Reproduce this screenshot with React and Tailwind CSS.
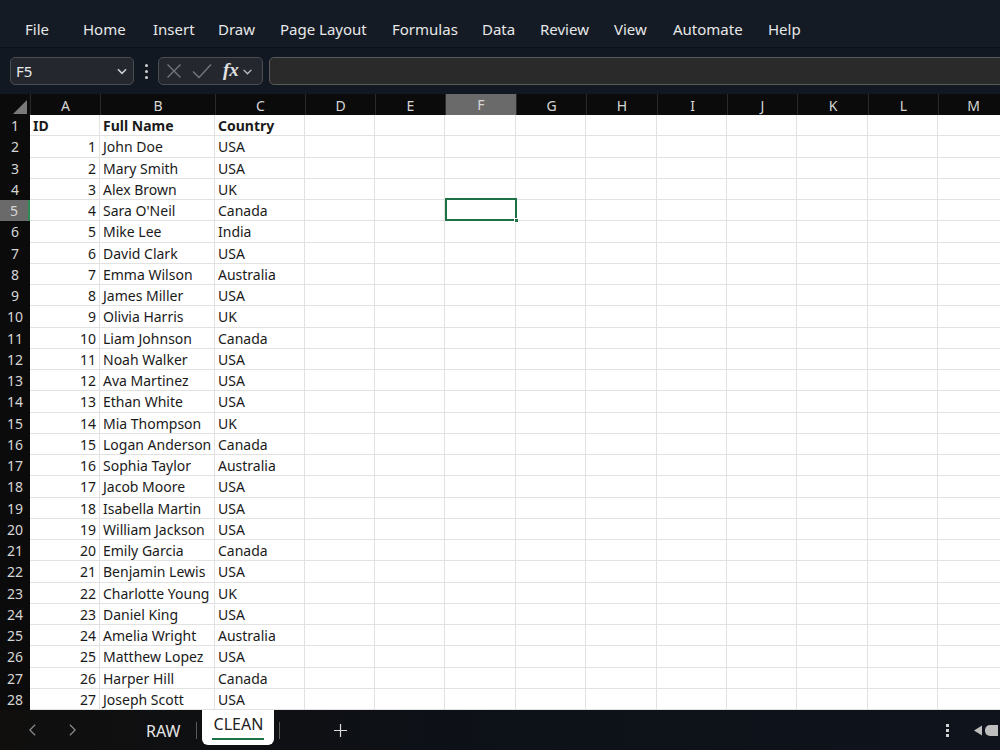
import React from 'react'

const menu = [
  ['File', 25],
  ['Home', 83],
  ['Insert', 153],
  ['Draw', 218],
  ['Page Layout', 280],
  ['Formulas', 392],
  ['Data', 482],
  ['Review', 540],
  ['View', 614],
  ['Automate', 673],
  ['Help', 768],
]

const cols = ['A', 'B', 'C', 'D', 'E', 'F', 'G', 'H', 'I', 'J', 'K', 'L', 'M']

const people = [
  ['John Doe', 'USA'],
  ['Mary Smith', 'USA'],
  ['Alex Brown', 'UK'],
  ["Sara O'Neil", 'Canada'],
  ['Mike Lee', 'India'],
  ['David Clark', 'USA'],
  ['Emma Wilson', 'Australia'],
  ['James Miller', 'USA'],
  ['Olivia Harris', 'UK'],
  ['Liam Johnson', 'Canada'],
  ['Noah Walker', 'USA'],
  ['Ava Martinez', 'USA'],
  ['Ethan White', 'USA'],
  ['Mia Thompson', 'UK'],
  ['Logan Anderson', 'Canada'],
  ['Sophia Taylor', 'Australia'],
  ['Jacob Moore', 'USA'],
  ['Isabella Martin', 'USA'],
  ['William Jackson', 'USA'],
  ['Emily Garcia', 'Canada'],
  ['Benjamin Lewis', 'USA'],
  ['Charlotte Young', 'UK'],
  ['Daniel King', 'USA'],
  ['Amelia Wright', 'Australia'],
  ['Matthew Lopez', 'USA'],
  ['Harper Hill', 'Canada'],
  ['Joseph Scott', 'USA'],
]

const gridCols = 'grid grid-cols-[30px_70px_115px_90px_70px_70px_71px_70px_71px_70px_70px_71px_70px_70px]'

function Chevron({ className }) {
  return (
    <svg viewBox="0 0 12 12" className={className} fill="none" stroke="currentColor" strokeWidth="1.3">
      <path d="M2.5 4.5 6 8l3.5-3.5" />
    </svg>
  )
}

function Row({ n, cells, bold }) {
  const selected = n === 5
  return (
    <div className={gridCols + ' h-[21.25px]'}>
      <div
        className={
          'flex items-center justify-center text-[14px] text-[#d6d6d6] ' +
          (selected ? 'bg-[#6a6a6a] border-r-2 border-[#2e8b57]' : 'bg-[#0b0b0b]')
        }
      >
        {n}
      </div>
      {cols.map((c, i) => {
        const v = cells[i] || ''
        return (
          <div
            key={c}
            className={
              'bg-white border-r border-b border-[#e2e2e2] text-[14px] text-[#1a1a1a] leading-[19px] pt-[1px] px-[3px] whitespace-nowrap overflow-visible ' +
              (i === 0 && !bold ? 'text-right ' : '') +
              (bold ? 'font-bold' : '')
            }
          >
            {v}
          </div>
        )
      })}
    </div>
  )
}

export default function App() {
  return (
    <div className="w-[1000px] h-[750px] overflow-hidden flex flex-col bg-[#131a24] font-['Noto_Sans',sans-serif]">
      {/* ribbon tabs */}
      <div className="h-[47px] shrink-0 flex items-center pt-[12px] bg-[#141b25] text-[15px] text-[#e8e8e8]">
        {menu.map(([m, x], i) => (
          <span
            key={m}
            className="whitespace-nowrap"
            style={{ width: (menu[i + 1] ? menu[i + 1][1] : x + 60) - x, marginLeft: i === 0 ? x : 0 }}
          >
            {m}
          </span>
        ))}
      </div>

      {/* formula bar */}
      <div className="h-[47px] shrink-0 flex items-center px-[10px] bg-[#121821] border-t border-[#0d1219]">
        <div className="w-[124px] h-[28px] rounded-[5px] bg-[#24282e] border border-[#4a4d52] flex items-center justify-between pl-[5px] pr-[4px] text-[15px] text-[#eaeaea]">
          <span>F5</span>
          <Chevron className="w-[14px] h-[14px] text-[#cfcfcf]" />
        </div>
        <div className="flex flex-col gap-[3px] ml-[11px] mr-[10px]">
          <span className="w-[3px] h-[3px] bg-[#d0d0d0] rounded-full" />
          <span className="w-[3px] h-[3px] bg-[#d0d0d0] rounded-full" />
          <span className="w-[3px] h-[3px] bg-[#d0d0d0] rounded-full" />
        </div>
        <div className="w-[105px] h-[28px] rounded-[5px] bg-[#24282e] border border-[#4a4d52] flex items-center pl-[7px] text-[#75787d]">
          <svg viewBox="0 0 16 16" className="w-[16px] h-[16px]" fill="none" stroke="currentColor" strokeWidth="1.3">
            <path d="M1.5 1.5l13 13M14.5 1.5l-13 13" />
          </svg>
          <svg viewBox="0 0 20 16" className="ml-[10px] w-[20px] h-[16px]" fill="none" stroke="currentColor" strokeWidth="1.3">
            <path d="M1 8.5l6 6L19 1.5" />
          </svg>
          <span className="ml-[11px] font-['Liberation_Serif',serif] italic font-bold text-[19px] text-[#e0e0e0] leading-none -mt-[3px]">fx</span>
          <Chevron className="ml-[2px] w-[13px] h-[13px] text-[#bdbdbd]" />
        </div>
        <div className="ml-[6px] flex-1 h-[28px] rounded-[5px] bg-[#2a2a2a] border border-[#5a5a5a] mr-[-14px]" />
      </div>

      {/* grid */}
      <div className="flex-1 bg-white relative overflow-hidden">
        <div className={gridCols + ' h-[21px] bg-[#0b0b0b] text-[14px] text-[#d6d6d6]'}>
          <div className="relative">
            <svg viewBox="0 0 10 10" className="absolute right-[3px] bottom-[3px] w-[14px] h-[14px]">
              <path d="M10 0 10 10 0 10Z" fill="#7a7a7a" />
            </svg>
          </div>
          {cols.map((c) => (
            <div
              key={c}
              className={
                'flex items-center justify-center border-l border-[#2a2a2a] ' +
                (c === 'F' ? 'bg-[#6a6a6a] border-b-2 border-b-[#2e8b57]' : '')
              }
            >
              {c}
            </div>
          ))}
        </div>
        <Row n={1} cells={['ID', 'Full Name', 'Country']} bold />
        {people.map((p, i) => (
          <Row key={i} n={i + 2} cells={[String(i + 1), p[0], p[1]]} />
        ))}
        {/* active cell */}
        <div className="absolute left-[445px] top-[104px] w-[72px] h-[23px] border-2 border-[#1e7145]">
          <div className="absolute -right-[4px] -bottom-[4px] w-[5px] h-[5px] bg-[#1e7145] border border-white" />
        </div>
      </div>

      {/* sheet tabs */}
      <div className="h-[40px] shrink-0 flex items-center bg-gradient-to-r from-[#100f0e] via-[#0d1118] to-[#0f131b] relative">
        <div className="flex items-center gap-[31px] pl-[28px] text-[#8a8a8a]">
          <svg viewBox="0 0 10 16" className="w-[9px] h-[14px]" fill="none" stroke="currentColor" strokeWidth="1.4">
            <path d="M8 2 2 8l6 6" />
          </svg>
          <svg viewBox="0 0 10 16" className="w-[9px] h-[14px]" fill="none" stroke="currentColor" strokeWidth="1.4">
            <path d="M2 2l6 6-6 6" />
          </svg>
        </div>
        <span className="ml-[69px] text-[16px] text-[#e6e6e6] mt-[2px]">RAW</span>
        <span className="ml-[16px] w-px h-[17px] bg-[#5a5a5a]" />
        <div className="ml-[5px] self-start h-[35px] w-[72px] bg-white rounded-b-[6px] flex flex-col items-center justify-center">
          <span className="text-[16px] text-[#222] leading-none">CLEAN</span>
          <span className="mt-[6px] w-[52px] h-[2px] bg-[#1e7145]" />
        </div>
        <span className="ml-[5px] w-px h-[17px] bg-[#5a5a5a]" />
        <svg viewBox="0 0 16 16" className="ml-[53px] w-[15px] h-[15px] text-[#d8d8d8]" fill="none" stroke="currentColor" strokeWidth="1.3">
          <path d="M8 1v14M1 8h14" />
        </svg>
        <div className="ml-auto flex items-center">
          <div className="flex flex-col gap-[2px]">
            <span className="w-[3px] h-[3px] bg-[#d0d0d0]" />
            <span className="w-[3px] h-[3px] bg-[#d0d0d0]" />
            <span className="w-[3px] h-[3px] bg-[#d0d0d0]" />
          </div>
          <div className="ml-[25px] mr-[2px] flex items-center gap-[3px]">
            <svg viewBox="0 0 8 10" className="w-[8px] h-[11px]">
              <path d="M8 0v10L0 5Z" fill="#bdbdbd" />
            </svg>
            <span className="w-[13px] h-[11px] bg-[#bdbdbd] rounded-l-[5px]" />
          </div>
        </div>
      </div>
    </div>
  )
}
